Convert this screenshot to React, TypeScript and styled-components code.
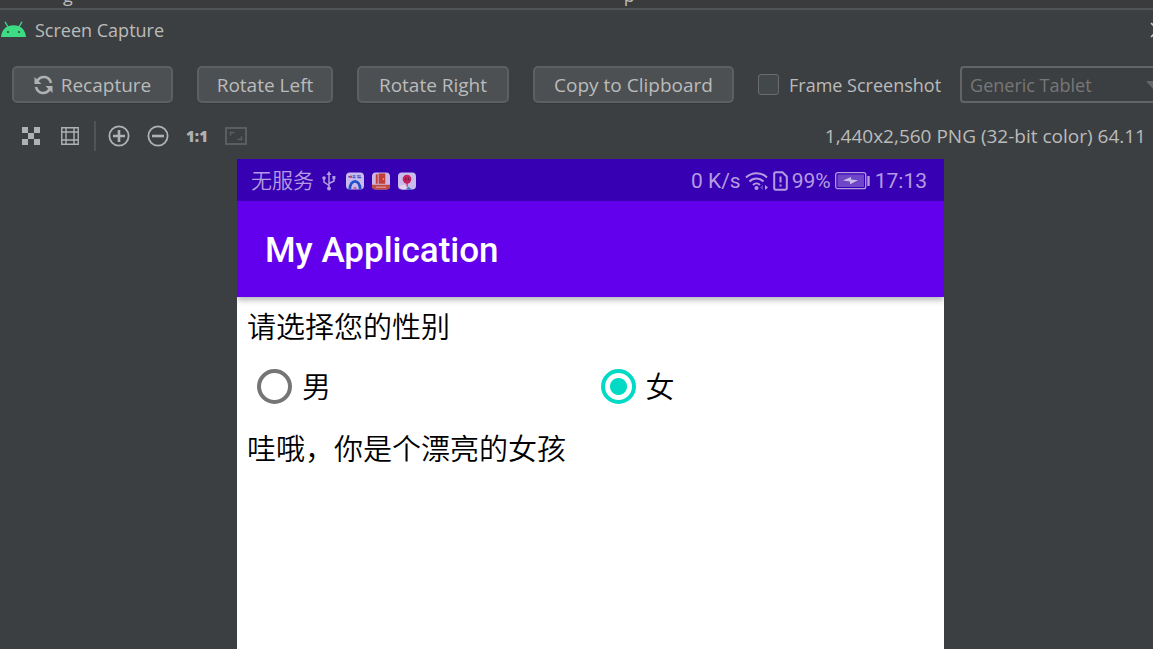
import React from "react";
import styled, { createGlobalStyle } from "styled-components";

const GlobalStyle = createGlobalStyle`
  *, *::before, *::after { box-sizing: border-box; }
  html, body { margin: 0; background: #3c3f41; overflow: hidden; }
  button, input, select { font: inherit; color: inherit; margin: 0; }
`;

const uiFont = `"Open Sans", "Noto Sans", "Noto Sans CJK SC", sans-serif`;
const deviceFont = `Roboto, "Noto Sans CJK SC", sans-serif`;

const Viewport = styled.div`
  height: 100vh;
  overflow: hidden;
  background: #3c3f41;
  color: #bbbbbb;
  font-family: ${uiFont};
  font-size: 18px;
  line-height: 26px;
`;

/* The dialog is a little wider than the visible area and runs off its right edge. */
const Dialog = styled.div`
  display: flex;
  flex-direction: column;
  height: 100%;
  margin-right: -28px;
`;

const HostStrip = styled.div`
  flex: none;
  display: flex;
  align-items: flex-end;
  gap: 551px;
  height: 10px;
  padding: 0 0 5px 63px;
  overflow: hidden;
  background: #3a3b3d;
  border-bottom: 2px solid #515355;
  line-height: 16px;
`;

const TitleBar = styled.header`
  flex: none;
  display: flex;
  align-items: center;
  gap: 9px;
  height: 40px;
  padding: 0 13px 0 1px;
`;

const Title = styled.h1`
  flex: 1;
  margin: 0;
  font-size: 18px;
  font-weight: 400;
`;

const CloseButton = styled.button`
  display: flex;
  padding: 0;
  border: 0;
  background: none;
  color: #c4c4c4;
`;

const ActionRow = styled.div`
  flex: none;
  display: flex;
  align-items: center;
  gap: 24px;
  padding: 16px 0 0 12px;
`;

const ActionButton = styled.button<{ $width: number }>`
  flex: none;
  display: flex;
  align-items: center;
  justify-content: center;
  gap: 8px;
  width: ${(p) => p.$width}px;
  height: 37px;
  padding: 0;
  border: 2px solid #5c6060;
  border-radius: 5px;
  background: #4c5052;
  box-shadow: 0 1px 1px #36393b;
  font-size: 19px;
  white-space: nowrap;
`;

const FrameOptions = styled.div`
  flex: 1;
  display: flex;
  align-items: center;
  gap: 19px;
`;

const CheckLabel = styled.label`
  display: flex;
  align-items: center;
  gap: 10px;
  white-space: nowrap;
`;

const CheckBox = styled.input`
  appearance: none;
  width: 21px;
  height: 21px;
  border: 1px solid #6b6b6b;
  border-radius: 3px;
  background: #43494a;
`;

const SelectBox = styled.div`
  flex: 1;
  display: flex;
  align-items: center;
  height: 37px;
  padding-right: 19px;
  border: 2px solid #646464;
  border-radius: 4px;
  color: #777777;
`;

const DeviceSelect = styled.select`
  appearance: none;
  flex: 1;
  height: 33px;
  padding: 0 0 0 8px;
  border: 0;
  background: transparent;
  opacity: 1;
`;

const Toolbar = styled.div`
  flex: none;
  display: flex;
  align-items: center;
  gap: 17px;
  height: 56px;
  padding: 10px 35px 0 20px;
`;

const ToolButton = styled.button<{ $dim?: boolean }>`
  display: flex;
  align-items: center;
  justify-content: center;
  width: 22px;
  height: 22px;
  padding: 0;
  border: 0;
  background: none;
  color: ${(p) => (p.$dim ? "#5b5d5f" : "#afb1b3")};
`;

const ActualSize = styled.span`
  font-size: 15px;
  font-weight: 800;
  line-height: 22px;
`;

const Divider = styled.span`
  width: 2px;
  height: 30px;
  margin: 0 -5px 0 -4px;
  background: #515355;
`;

const ImageInfo = styled.span`
  margin-left: auto;
  font-size: 19px;
  white-space: nowrap;
`;

const Preview = styled.main`
  flex: 1;
  display: flex;
  flex-direction: column;
  margin: 0 237px;
  background: #ffffff;
  color: #000000;
  font-family: ${deviceFont};
`;

const StatusBar = styled.div`
  display: flex;
  align-items: center;
  justify-content: space-between;
  height: 42px;
  padding: 2px 17px 0 14px;
  background: #3700b3;
  color: #b39ce1;
  font-size: 21px;
`;

const StatusGroup = styled.div<{ $gap: number }>`
  display: flex;
  align-items: center;
  gap: ${(p) => p.$gap}px;
  white-space: nowrap;
`;

const Carrier = styled.span`
  font-weight: 350;
`;

const AppBar = styled.div`
  display: flex;
  align-items: center;
  height: 96px;
  padding: 4px 28px 0;
  background: #6200ee;
  box-shadow: 0 3px 6px rgba(0, 0, 0, 0.3);
  clip-path: inset(0 0 -12px 0);
  color: #ffffff;
`;

const AppTitle = styled.h2`
  margin: 0;
  font-size: 35px;
  font-weight: 500;
  line-height: 40px;
`;

const Form = styled.form`
  display: flex;
  flex-direction: column;
  padding: 11px 0 10px 10px;
  font-size: 29px;
  line-height: 40px;
  font-weight: 350;
`;

const Message = styled.p`
  margin: 0;
`;

const RadioRow = styled.div`
  display: grid;
  grid-template-columns: 1fr 1fr;
  padding: 20px 0 22px 10px;
`;

const RadioLabel = styled.label`
  display: flex;
  align-items: center;
  gap: 10px;
`;

const Radio = styled.input`
  appearance: none;
  width: 35px;
  height: 35px;
  margin-bottom: 3px;
  border: 4px solid #757575;
  border-radius: 50%;
  &:checked {
    border-color: #03dac5;
    background: radial-gradient(circle, #03dac5 8px, transparent 9px);
  }
`;

const AndroidIcon = () => (
  <svg width="25" height="18" viewBox="0 0 25 18" aria-hidden="true">
    <path d="M4.2 1.2 7 6M20.800 1.200 18 6" stroke="#3ddc84" strokeWidth="1.300" strokeLinecap="round" />
    <path d="M0 16C.6 8.600 5.500 4.200 12.500 4.200S24.400 8.600 25 16Z" fill="#3ddc84" />
    <circle cx="7" cy="11" r="1.100" fill="#2b4a3a" />
    <circle cx="18" cy="11" r="1.100" fill="#2b4a3a" />
  </svg>
);

const RefreshIcon = () => (
  <svg width="19" height="20" viewBox="0 0 19 20" fill="none" aria-hidden="true">
    <path d="M3.500 5.500C7 .2 15 .8 17 8M15.500 14.500C12 19.800 4 19.200 2 12" stroke="#afb1b3" strokeWidth="2.600" />
    <path d="M.5 2V9H7.500ZM18.500 18V11H11.500Z" fill="#afb1b3" />
  </svg>
);

const ChessIcon = () => (
  <svg width="18" height="18" viewBox="0 0 18 18" fill="currentColor" aria-hidden="true">
    <path d="M0 0h6v6H0zM12 0h6v6h-6zM6 6h6v6H6zM0 12h6v6H0zM12 12h6v6h-6z" />
  </svg>
);

const GridIcon = () => (
  <svg width="18" height="18" viewBox="0 0 18 18" fill="none" stroke="currentColor" aria-hidden="true">
    <path d="M.75.75h16.500v16.500H.75zM5 1v16M13 1v16M1 5h16M1 13h16" strokeWidth="1.400" />
  </svg>
);

const ZoomIcon = ({ plus }: { plus?: boolean }) => (
  <svg width="22" height="22" viewBox="0 0 22 22" fill="none" stroke="currentColor" aria-hidden="true">
    <circle cx="11" cy="11" r="9.600" strokeWidth="1.800" />
    <path d={plus ? "M5 11h12M11 5v12" : "M5 11h12"} strokeWidth="2.600" />
  </svg>
);

const FitIcon = () => (
  <svg width="22" height="18" viewBox="0 0 22 18" fill="none" stroke="currentColor" aria-hidden="true">
    <path d="M1 1h20v16H1z" strokeWidth="2" />
    <path d="M5.500 8.500v-3h4M16.500 9.500v3h-4" strokeWidth="1.600" />
  </svg>
);

const UsbIcon = () => (
  <svg width="16" height="20" viewBox="0 0 16 20" fill="none" aria-hidden="true">
    <path d="M7 17V3M7 14.500 2 11V7M7 12.500 12 10V7" stroke="currentColor" strokeWidth="1.500" />
    <path d="M7 0 9.500 4h-5zM10.400 5h3v3.200h-3z" fill="currentColor" />
    <circle cx="2" cy="7" r="1.800" fill="currentColor" />
    <circle cx="7" cy="17.500" r="2" fill="currentColor" />
  </svg>
);

const ArchAppIcon = () => (
  <svg width="18" height="18" viewBox="0 0 19 18" aria-hidden="true">
    <rect width="19" height="18" rx="4" fill="#c9bbec" />
    <path d="M4 18C4.500 6.500 14.500 6.500 15 18" fill="none" stroke="#2450c8" strokeWidth="3" />
    <path d="M2.500 4.500h3M7 3.500h3M7 5.500h3M11.500 3.500h4M12 5.500h4" stroke="#4557cc" strokeWidth="1.400" />
    <circle cx="5" cy="4.500" r="1.400" fill="#c23a70" />
    <path d="M7.500 17c.6-2 3.400-2 4 0z" fill="#c23a60" />
  </svg>
);

const BookAppIcon = () => (
  <svg width="18" height="18" viewBox="0 0 19 18" aria-hidden="true">
    <rect width="19" height="18" rx="4" fill="#cbb8e4" />
    <path d="M0 13h19v1a4 4 0 0 1-4 4H4a4 4 0 0 1-4-4z" fill="#c0483c" />
    <path d="M4 2h2v10H4zM7 1h7v11H7z" fill="#c63d35" />
    <path d="M12 6v2M4 15.500h11" stroke="#dfb3bd" />
  </svg>
);

const MapAppIcon = () => (
  <svg width="18" height="18" viewBox="0 0 19 18" aria-hidden="true">
    <rect width="19" height="18" rx="4" fill="#c9bbec" />
    <path d="M1 14l8-1 1 5H4z" fill="#e3d5e8" />
    <path d="M8 18l3-3 4 3z" fill="#3f7ccc" />
    <circle cx="9.500" cy="7" r="4.600" fill="#c3225c" />
    <path d="M6 10h7l-3.500 2.500zM9 11h1.200v4H9z" fill="#c3225c" />
    <path d="M8 5.500v3M11 5.500v3" stroke="#7d1a58" strokeWidth="1.400" />
  </svg>
);

const WifiIcon = () => (
  <svg width="24" height="20" viewBox="0 0 24 20" fill="none" stroke="currentColor" aria-hidden="true">
    <path d="M1 6.500C7 .7 16 .7 22 6.500M4.500 10.500C8.500 6.500 14.500 6.500 18.500 10.500M8 14C10 12 13 12 15 14" strokeWidth="2" />
    <circle cx="11.500" cy="17" r="2" fill="currentColor" stroke="none" />
    <path d="M18 14v5l-3-2.500z" fill="currentColor" stroke="none" opacity=".4" />
    <path d="M20 14v5l3-2.500z" fill="currentColor" stroke="none" />
  </svg>
);

const SimIcon = () => (
  <svg width="15" height="20" viewBox="0 0 15 20" fill="none" stroke="currentColor" aria-hidden="true">
    <path d="M3 1.200h6.500L13.800 5.500V17a1.800 1.800 0 0 1-1.800 1.800H3A1.800 1.800 0 0 1 1.200 17V3A1.800 1.800 0 0 1 3 1.200z" strokeWidth="2" />
    <path d="M7.500 5.500v6M7.500 13.500v2" strokeWidth="2" />
  </svg>
);

const BatteryIcon = () => (
  <svg width="36" height="18" viewBox="0 0 36 18" aria-hidden="true">
    <rect x=".7" y=".7" width="30" height="16" rx="2" fill="none" stroke="currentColor" strokeWidth="1.300" />
    <rect x="2.500" y="2.500" width="26.500" height="12.500" fill="#6f46c8" />
    <path d="M33.500 4v10" stroke="currentColor" strokeWidth="2.400" />
    <path d="M8 8.500 16 5v2.500l7 .8-8 4V9.500z" fill="#cabbed" />
  </svg>
);

const CloseIcon = () => (
  <svg width="18" height="16" viewBox="0 0 18 16" fill="none" stroke="currentColor" aria-hidden="true">
    <path d="M1 1l14 14M15 1 1 15" strokeWidth="1.600" />
  </svg>
);

export default function App() {
  return (
    <Viewport>
      <GlobalStyle />
      <Dialog>
        <HostStrip aria-hidden="true">
          <span>g</span>
          <span>p</span>
        </HostStrip>
        <TitleBar>
          <AndroidIcon />
          <Title>Screen Capture</Title>
          <CloseButton aria-label="Close">
            <CloseIcon />
          </CloseButton>
        </TitleBar>

        <ActionRow>
          <ActionButton $width={161}>
            <RefreshIcon />
            Recapture
          </ActionButton>
          <ActionButton $width={136}>Rotate Left</ActionButton>
          <ActionButton $width={152}>Rotate Right</ActionButton>
          <ActionButton $width={201}>Copy to Clipboard</ActionButton>
          <FrameOptions>
            <CheckLabel>
              <CheckBox type="checkbox" />
              Frame Screenshot
            </CheckLabel>
            <SelectBox>
              <DeviceSelect aria-label="Device frame" disabled>
                <option>Generic Tablet</option>
              </DeviceSelect>
              <svg width="14" height="8" viewBox="0 0 14 8" fill="#646464" aria-hidden="true">
                <path d="M0 0h14L7 8z" />
              </svg>
            </SelectBox>
          </FrameOptions>
        </ActionRow>

        <Toolbar>
          <ToolButton aria-label="Show chessboard">
            <ChessIcon />
          </ToolButton>
          <ToolButton aria-label="Show grid">
            <GridIcon />
          </ToolButton>
          <Divider />
          <ToolButton aria-label="Zoom in">
            <ZoomIcon plus />
          </ToolButton>
          <ToolButton aria-label="Zoom out">
            <ZoomIcon />
          </ToolButton>
          <ToolButton aria-label="Actual size">
            <ActualSize>1:1</ActualSize>
          </ToolButton>
          <ToolButton aria-label="Fit zoom to window" $dim>
            <FitIcon />
          </ToolButton>
          <ImageInfo>1,440x2,560 PNG (32-bit color) 64.11</ImageInfo>
        </Toolbar>

        <Preview>
          <StatusBar>
            <StatusGroup $gap={8}>
              <Carrier>无服务</Carrier>
              <UsbIcon />
              <ArchAppIcon />
              <BookAppIcon />
              <MapAppIcon />
            </StatusGroup>
            <StatusGroup $gap={4}>
              <span>0 K/s</span>
              <WifiIcon />
              <SimIcon />
              <span>99%</span>
              <BatteryIcon />
              <span>17:13</span>
            </StatusGroup>
          </StatusBar>
          <AppBar>
            <AppTitle>My Application</AppTitle>
          </AppBar>
          <Form>
            <Message>请选择您的性别</Message>
            <RadioRow>
              <RadioLabel>
                <Radio type="radio" name="gender" />男
              </RadioLabel>
              <RadioLabel>
                <Radio type="radio" name="gender" defaultChecked />女
              </RadioLabel>
            </RadioRow>
            <Message>哇哦，你是个漂亮的女孩</Message>
          </Form>
        </Preview>
      </Dialog>
    </Viewport>
  );
}
